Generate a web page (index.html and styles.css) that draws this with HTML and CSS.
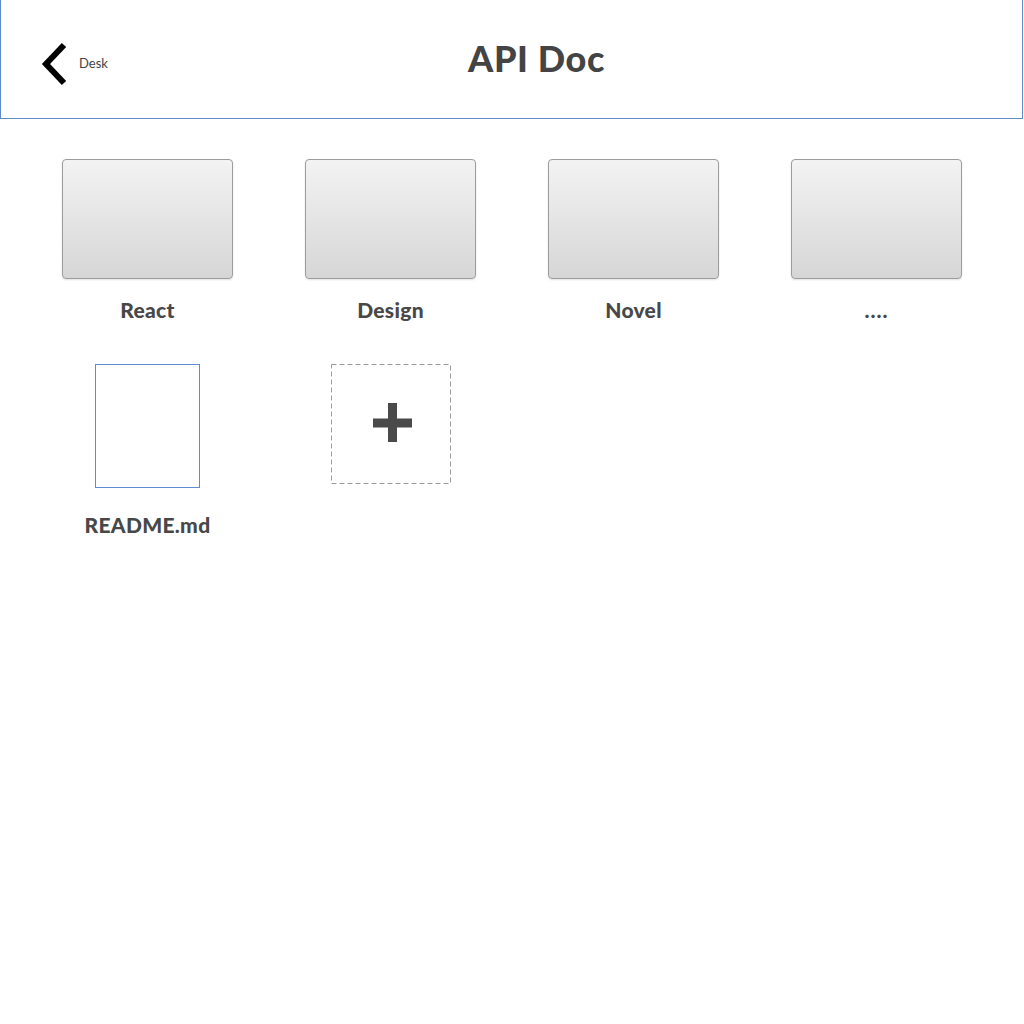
FILE: index.html
```html
<!DOCTYPE html>
<html>
<head>
<meta charset="utf-8">
<link rel="stylesheet" href="styles.css">
</head>
<body>
<header class="header">
  <a class="back">
    <svg class="chev" width="30" height="44" viewBox="0 0 30 44">
      <polyline points="24,3 6,22 24,41" fill="none" stroke="#000" stroke-width="6" stroke-linejoin="miter"/>
    </svg>
    <span class="back-label">Desk</span>
  </a>
  <h1 class="title">API Doc</h1>
</header>
<main class="grid">
  <div class="tile"><div class="folder"></div><div class="label">React</div></div>
  <div class="tile"><div class="folder"></div><div class="label">Design</div></div>
  <div class="tile"><div class="folder"></div><div class="label">Novel</div></div>
  <div class="tile"><div class="folder"></div><div class="label dots">....</div></div>
  <div class="tile row2"><div class="doc"></div><div class="label doc-label">README.md</div></div>
  <div class="tile row2">
    <div class="add">
      <svg width="121" height="121" viewBox="0 0 121 121" class="add-frame">
        <rect x="0.5" y="0.5" width="119" height="119" fill="none" stroke="#9a9a9a" stroke-width="1" stroke-dasharray="5 3"/>
      </svg>
      <svg class="plus" width="40" height="40" viewBox="0 0 40 40">
        <rect x="0" y="15.5" width="39" height="9" fill="#4a4a4a"/>
        <rect x="15" y="0" width="9" height="39" fill="#4a4a4a"/>
      </svg>
    </div>
  </div>
</main>
</body>
</html>
```
FILE: styles.css
```css
* { box-sizing: border-box; }
html, body { margin: 0; padding: 0; background: #fff; }
body { font-family: Lato, "Open Sans", sans-serif; color: #444; }

.header {
  height: 119px;
  width: 1023px;
  border-left: 1px solid #5f8bc9;
  border-right: 1px solid #5f8bc9;
  border-bottom: 1px solid #5f8bc9;
  display: grid;
  grid-template-columns: 1fr;
  align-items: center;
}
.back {
  grid-area: 1 / 1;
  justify-self: start;
  display: flex;
  align-items: center;
  margin-left: 39px;
  margin-top: 9px;
  color: #444;
}
.chev { display: block; }
.back-label {
  font-size: 13px;
  margin-left: 9px;
  margin-top: -2px;
  color: #444;
}
.title {
  grid-area: 1 / 1;
  justify-self: center;
  margin: 0 0 0 50px;
  margin-top: -3px;
  font-size: 36px;
  font-weight: 900;
  color: #444;
  letter-spacing: 0.6px;
}

.grid {
  display: grid;
  grid-template-columns: repeat(4, 243px);
  padding: 40px 26px 0;
  row-gap: 42px;
}
.tile {
  display: flex;
  flex-direction: column;
  align-items: center;
}
.folder {
  width: 171px;
  height: 120px;
  border: 1px solid #9c9c9c;
  border-radius: 4px;
  background: linear-gradient(#f3f3f3, #d6d6d6);
  box-shadow: 0 1px 2px rgba(0,0,0,0.12);
}
.label {
  margin-top: 19px;
  font-size: 21px;
  line-height: 24px;
  font-weight: 900;
  color: #484848;
  letter-spacing: 0.3px;
}
.dots { letter-spacing: 1px; }
.doc {
  width: 105px;
  height: 124px;
  border: 1px solid #5f8bd0;
  background: #fff;
  margin-right: 1px;
}
.doc-label { margin-top: 25px; }
.add {
  width: 121px;
  height: 121px;
  display: grid;
  place-items: center;
  margin-left: 2px;
}
.add-frame, .plus { grid-area: 1 / 1; }
.plus { margin-left: 2px; margin-top: -3px; }
```
